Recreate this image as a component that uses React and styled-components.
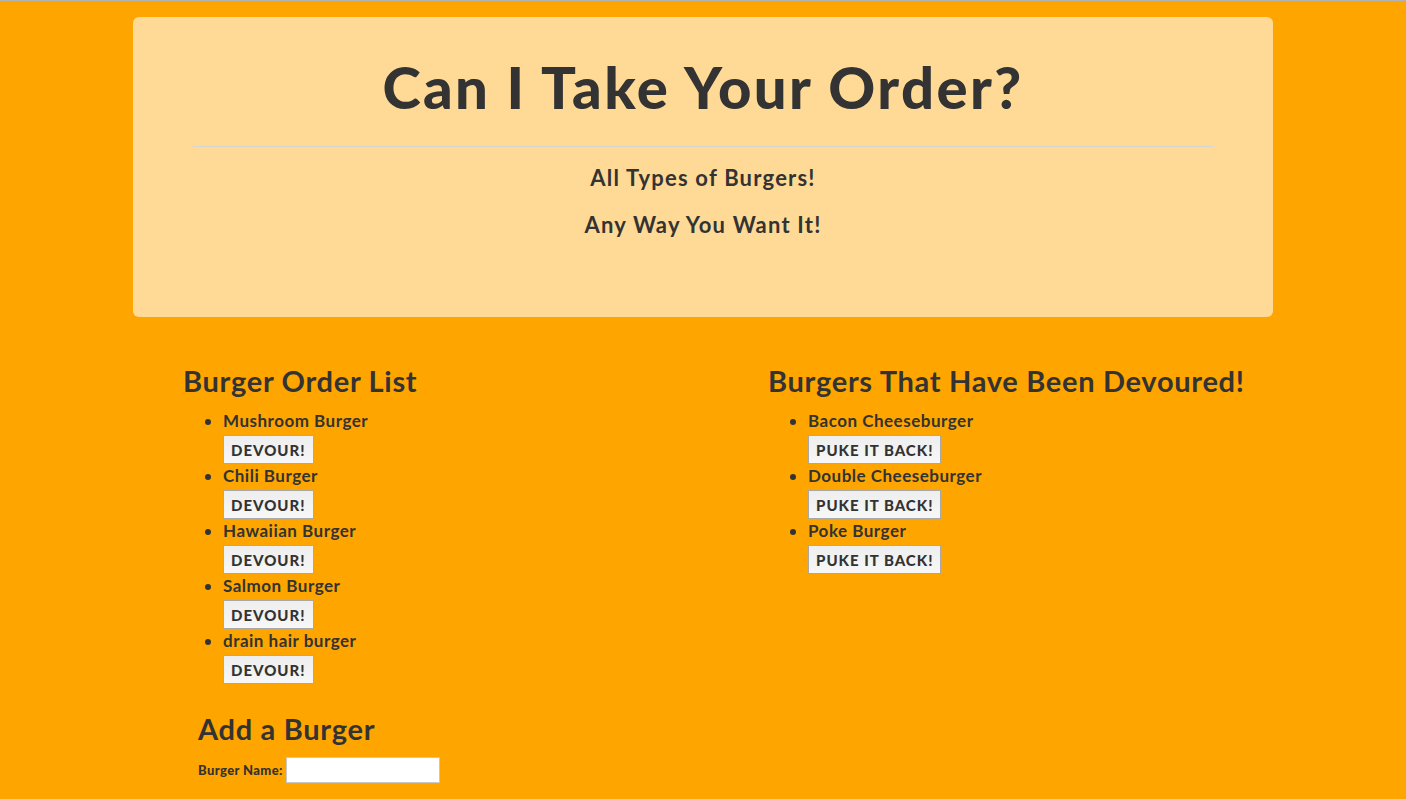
import React from 'react';
import styled, { createGlobalStyle } from 'styled-components';

const GlobalStyle = createGlobalStyle`
  html, body {
    margin: 0;
    padding: 0;
  }
  body {
    background: #ffa500;
    font-family: 'Lato', 'Liberation Sans', sans-serif;
    color: #333;
  }
`;

const orders = ['Mushroom Burger', 'Chili Burger', 'Hawaiian Burger', 'Salmon Burger', 'drain hair burger'];
const devoured = ['Bacon Cheeseburger', 'Double Cheeseburger', 'Poke Burger'];

const App = () => {
  return (
    <Page>
      <GlobalStyle />
      <Container>
        <Jumbotron>
          <Title>Can I Take Your Order?</Title>
          <Rule />
          <Tagline>All Types of Burgers!</Tagline>
          <Tagline>Any Way You Want It!</Tagline>
        </Jumbotron>
        <Row>
          <Column>
            <Heading>Burger Order List</Heading>
            <BurgerList>
              {orders.map((name) => (
                <Item key={name}>
                  {name}
                  <ActionButton>Devour!</ActionButton>
                </Item>
              ))}
            </BurgerList>
            <Form>
              <Heading>Add a Burger</Heading>
              <Field>
                <Label>Burger Name:</Label>
                <Input type="text" />
              </Field>
            </Form>
          </Column>
          <Column>
            <Heading>Burgers That Have Been Devoured!</Heading>
            <BurgerList>
              {devoured.map((name) => (
                <Item key={name}>
                  {name}
                  <ActionButton>Puke it back!</ActionButton>
                </Item>
              ))}
            </BurgerList>
          </Column>
        </Row>
      </Container>
    </Page>
  );
};

const Page = styled.div`
  min-height: 100vh;
  border-top: 1px solid #b3b3b3;
  box-sizing: border-box;
`;

const Container = styled.div`
  width: 1140px;
  margin: 0 auto;
  padding-top: 16px;
`;

const Jumbotron = styled.div`
  height: 300px;
  box-sizing: border-box;
  padding: 32px 60px 0;
  background: #ffda96;
  border-radius: 6px;
  text-align: center;
`;

const Title = styled.h1`
  margin: 0;
  font-size: 58px;
  line-height: 76px;
  font-weight: 900;
  letter-spacing: 2.4px;
`;

const Rule = styled.hr`
  margin: 21px 0 16px;
  border: 0;
  border-top: 1px solid #d5d5d5;
`;

const Tagline = styled.p`
  margin: 0 0 17px;
  font-size: 22px;
  line-height: 30px;
  font-weight: 700;
  letter-spacing: 1.2px;
`;

const Row = styled.div`
  display: grid;
  grid-template-columns: 585px 1fr;
  margin-top: 46px;
`;

const Column = styled.div`
  padding-left: 50px;
`;

const Heading = styled.h2`
  margin: 0 0 10px;
  font-size: 29px;
  line-height: 36px;
  font-weight: 700;
  letter-spacing: 0.7px;
`;

const BurgerList = styled.ul`
  margin: 0;
  padding-left: 40px;
  list-style: disc;
`;

const Item = styled.li`
  font-size: 17px;
  font-weight: 700;
  line-height: 24px;
  letter-spacing: 0.5px;
`;

const ActionButton = styled.button`
  display: block;
  height: 29px;
  margin-top: 2px;
  padding: 0 7px;
  font-family: inherit;
  font-size: 15px;
  font-weight: 900;
  letter-spacing: 1px;
  color: #333;
  text-transform: uppercase;
  background: linear-gradient(#eeeeee, #f7f7f7);
  border: 1px solid #a8a8a8;
  border-radius: 0;
`;

const Form = styled.form`
  margin-top: 27px;
  padding-left: 15px;
`;

const Field = styled.div`
  display: flex;
  align-items: center;
  gap: 3px;
  margin-top: 8px;
`;

const Label = styled.label`
  font-size: 13px;
  font-weight: 900;
  letter-spacing: 0.4px;
`;

const Input = styled.input`
  width: 154px;
  height: 26px;
  box-sizing: border-box;
  border: 1px solid #c8c8c8;
  background: #fff;
`;

export default App;
